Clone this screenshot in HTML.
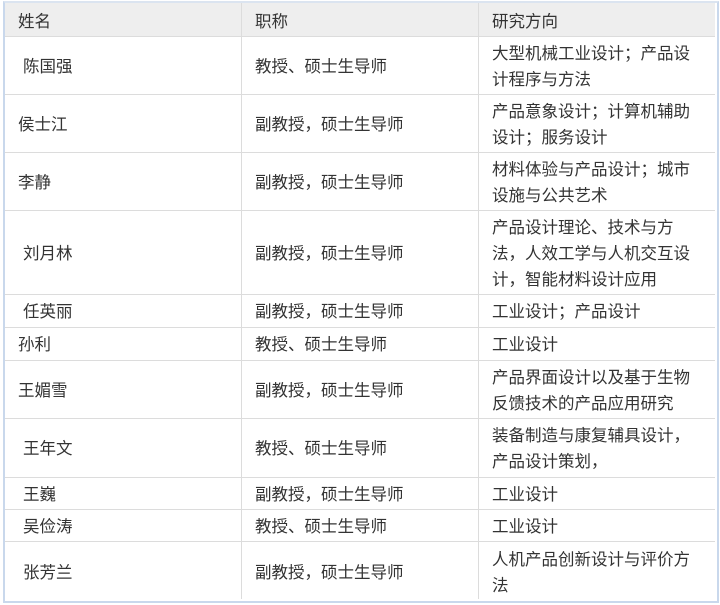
<!DOCTYPE html><html><head><meta charset="utf-8"><style>
body{margin:0;width:720px;height:603px;background:#fff;position:relative;overflow:hidden;font-family:"Liberation Sans","Noto Sans CJK SC",sans-serif;font-size:16.5px;color:#333}
.frame{position:absolute;left:3px;top:1px;width:712px;height:598px;border:2px solid #c9d8ec;border-top-color:#dbe4f0}
.hd{position:absolute;left:5px;top:3px;width:710px;height:33px;background:#eeeeee}
.h{position:absolute;left:5px;width:710px;height:1px;background:#dcdcdc}
.v{position:absolute;top:3px;height:596px;width:1px;background:#dcdcdc}
.w{position:absolute;left:0;top:2px;width:720px;height:603px}
.t{position:absolute;line-height:26px;white-space:nowrap}
</style></head><body>
<div class="hd"></div>
<div class="frame"></div>
<div class="h" style="top:36px"></div><div class="h" style="top:94px"></div><div class="h" style="top:152px"></div><div class="h" style="top:210px"></div><div class="h" style="top:294px"></div><div class="h" style="top:327px"></div><div class="h" style="top:360px"></div><div class="h" style="top:418px"></div><div class="h" style="top:477px"></div><div class="h" style="top:509px"></div><div class="h" style="top:541px"></div>
<div class="v" style="left:241px"></div><div class="v" style="left:478px"></div>
<div class="w">
<div class="t" style="left:18px;top:7px">姓名</div><div class="t" style="left:255px;top:7px">职称</div><div class="t" style="left:492px;top:7px">研究方向</div>

<div class="t" style="left:23px;top:52px">陈国强</div><div class="t" style="left:255px;top:52px">教授、硕士生导师</div><div class="t" style="left:492px;top:39px">大型机械工业设计；产品设<br>计程序与方法</div>
<div class="t" style="left:18px;top:110px">侯士江</div><div class="t" style="left:255px;top:110px">副教授，硕士生导师</div><div class="t" style="left:492px;top:97px">产品意象设计；计算机辅助<br>设计；服务设计</div>
<div class="t" style="left:18px;top:168px">李静</div><div class="t" style="left:255px;top:168px">副教授，硕士生导师</div><div class="t" style="left:492px;top:155px">材料体验与产品设计；城市<br>设施与公共艺术</div>
<div class="t" style="left:23px;top:239px">刘月林</div><div class="t" style="left:255px;top:239px">副教授，硕士生导师</div><div class="t" style="left:492px;top:213px">产品设计理论、技术与方<br>法，人效工学与人机交互设<br>计，智能材料设计应用</div>
<div class="t" style="left:23px;top:297px">任英丽</div><div class="t" style="left:255px;top:297px">副教授，硕士生导师</div><div class="t" style="left:492px;top:297px">工业设计；产品设计</div>
<div class="t" style="left:18px;top:330px">孙利</div><div class="t" style="left:255px;top:330px">教授、硕士生导师</div><div class="t" style="left:492px;top:330px">工业设计</div>
<div class="t" style="left:18px;top:376px">王媚雪</div><div class="t" style="left:255px;top:376px">副教授，硕士生导师</div><div class="t" style="left:492px;top:363px">产品界面设计以及基于生物<br>反馈技术的产品应用研究</div>
<div class="t" style="left:23px;top:434px">王年文</div><div class="t" style="left:255px;top:434px">教授、硕士生导师</div><div class="t" style="left:492px;top:421px">装备制造与康复辅具设计，<br>产品设计策划，</div>
<div class="t" style="left:23px;top:480px">王巍</div><div class="t" style="left:255px;top:480px">副教授，硕士生导师</div><div class="t" style="left:492px;top:480px">工业设计</div>
<div class="t" style="left:23px;top:512px">吴俭涛</div><div class="t" style="left:255px;top:512px">教授、硕士生导师</div><div class="t" style="left:492px;top:512px">工业设计</div>
<div class="t" style="left:23px;top:558px">张芳兰</div><div class="t" style="left:255px;top:558px">副教授，硕士生导师</div><div class="t" style="left:492px;top:545px">人机产品创新设计与评价方<br>法</div>
</div>
</body></html>
